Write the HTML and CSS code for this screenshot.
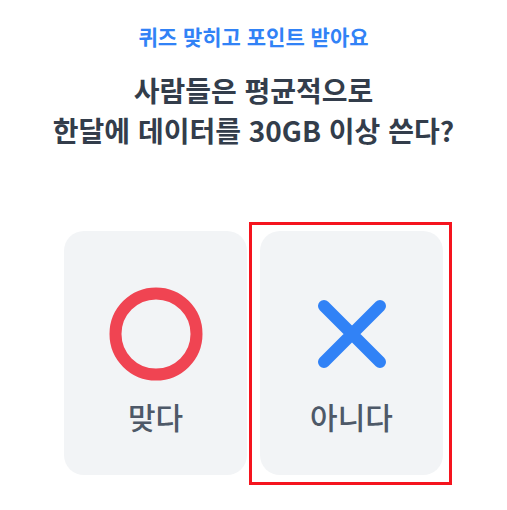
FILE: index.html
```html
<!DOCTYPE html>
<html lang="ko">
<head>
    <meta charset="UTF-8">
    <meta name="viewport" content="width=device-width, initial-scale=1.0">
    <title>OX 퀴즈</title>
    <link rel="stylesheet" href="styles.css">
</head>
<body>
    <div class="quiz">
        <p class="eyebrow">퀴즈 맞히고 포인트 받아요</p>
        <h1 class="question">사람들은 평균적으로<br>한달에 데이터를 30GB 이상 쓴다?</h1>

        <div class="choices">
            <div class="choice" role="button">
                <svg class="choice-icon" width="96" height="96" viewBox="0 0 96 96">
                    <circle cx="48" cy="48" r="40.5" fill="none" stroke="#f04452" stroke-width="12"/>
                </svg>
                <span class="choice-label">맞다</span>
            </div>
            <div class="choice is-selected" role="button">
                <svg class="choice-icon" width="96" height="96" viewBox="0 0 96 96">
                    <path d="M20 20 L76 76 M76 20 L20 76" fill="none" stroke="#3182f6" stroke-width="12" stroke-linecap="round"/>
                </svg>
                <span class="choice-label">아니다</span>
            </div>
        </div>
    </div>
</body>
</html>
```

FILE: styles.css
```css
body {
    margin: 0;
    background-color: #ffffff;
    font-family: "Noto Sans CJK KR", "Noto Sans", sans-serif;
}
.quiz {
    padding: 22px 0 34px;
    text-align: center;
}
.eyebrow {
    margin: 0;
    font-size: 21px;
    line-height: 28px;
    font-weight: 600;
    color: #3182f6; /* toss blue */
}
.question {
    margin: 20px 0 0;
    font-size: 28px;
    line-height: 40px;
    font-weight: 700;
    color: #333d4b;
}
.choices {
    display: flex;
    justify-content: center;
    gap: 13px;
    margin-top: 81px;
}
.choice {
    position: relative;
    box-sizing: border-box;
    width: 183px;
    height: 244px;
    display: flex;
    flex-direction: column;
    align-items: center;
    padding-top: 55px;
    border-radius: 20px;
    background-color: #f2f4f6;
    cursor: pointer;
}
/* red highlight box drawn over the chosen card */
.choice.is-selected::after {
    content: "";
    position: absolute;
    top: -9px;
    right: -9px;
    bottom: -10px;
    left: -11px;
    border: 3px solid #f5141e;
}
.choice-icon {
    display: block;
}
.choice-label {
    margin-top: 16px;
    font-size: 30px;
    line-height: 36px;
    font-weight: 500;
    color: #4e5968;
}
```
